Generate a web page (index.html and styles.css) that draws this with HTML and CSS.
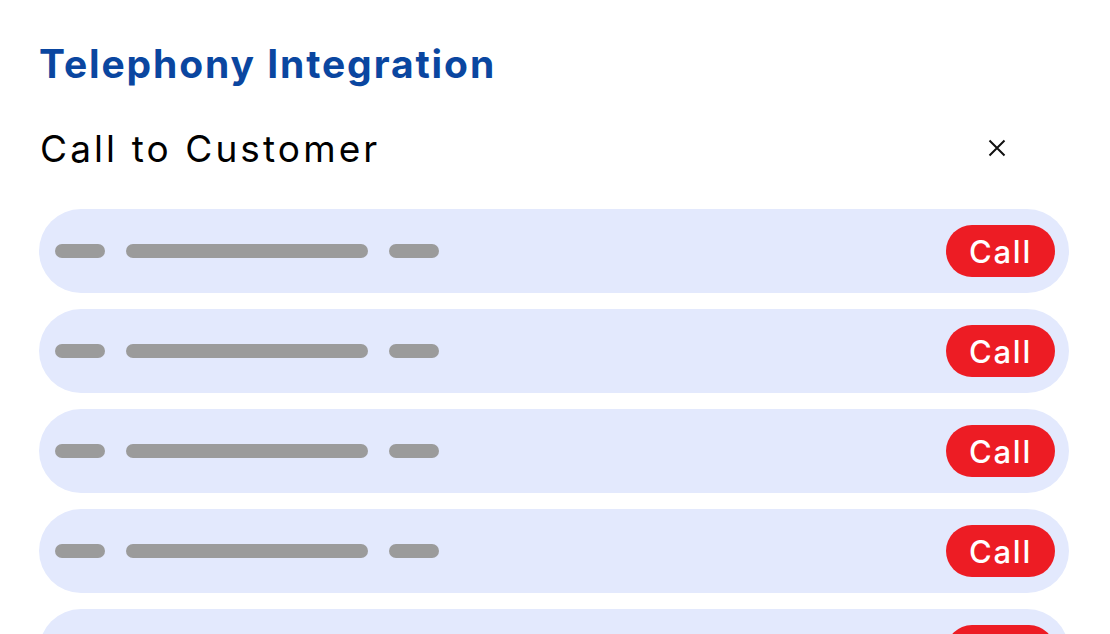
FILE: index.html
```html
<!DOCTYPE html>
<html>
<head>
<meta charset="utf-8">
<link rel="stylesheet" href="styles.css">
</head>
<body>
<main class="page">
  <h1 class="title">Telephony Integration</h1>
  <div class="header">
    <h2 class="subtitle">Call to Customer</h2>
    <button class="close" aria-label="Close">
      <svg width="18" height="18" viewBox="0 0 18 18"><path d="M1.5 1.5 L16.5 16.5 M16.5 1.5 L1.5 16.5" stroke="#111" stroke-width="2" fill="none"/></svg>
    </button>
  </div>
  <ul class="list">
    <li class="row"><span class="bar short"></span><span class="bar long"></span><span class="bar short"></span><button class="call">Call</button></li>
    <li class="row"><span class="bar short"></span><span class="bar long"></span><span class="bar short"></span><button class="call">Call</button></li>
    <li class="row"><span class="bar short"></span><span class="bar long"></span><span class="bar short"></span><button class="call">Call</button></li>
    <li class="row"><span class="bar short"></span><span class="bar long"></span><span class="bar short"></span><button class="call">Call</button></li>
    <li class="row"><span class="bar short"></span><span class="bar long"></span><span class="bar short"></span><button class="call">Call</button></li>
  </ul>
</main>
</body>
</html>
```
FILE: styles.css
```css
html, body {
  margin: 0;
  padding: 0;
  background: #fff;
  overflow: hidden;
  height: 634px;
}
body {
  font-family: Inter, "Noto Sans", sans-serif;
}
.page {
  padding: 36px 41px 0 39px;
}
.title {
  margin: 0;
  font-size: 39px;
  font-weight: 700;
  color: #0a46a0;
  line-height: 56px;
  letter-spacing: 1.9px;
}
.header {
  display: flex;
  align-items: center;
  justify-content: space-between;
  height: 72px;
  margin-top: 20px;
  margin-bottom: 25px;
}
.subtitle {
  margin: 0 0 0 1px;
  font-size: 37px;
  font-weight: 400;
  color: #000;
  letter-spacing: 3.1px;
}
.close {
  border: 0;
  background: none;
  padding: 0;
  width: 18px;
  height: 18px;
  margin-right: 63px;
  display: flex;
}
.list {
  list-style: none;
  margin: 0;
  padding: 0;
  display: flex;
  flex-direction: column;
  gap: 16px;
}
.row {
  display: flex;
  align-items: center;
  height: 84px;
  flex-shrink: 0;
  box-sizing: border-box;
  padding: 0 14px 0 16px;
  background: #e3e9fd;
  border-radius: 42px;
}
.bar {
  height: 14px;
  border-radius: 7px;
  background: #9b9b9b;
  margin-right: 21px;
}
.bar.short { width: 50px; }
.bar.long { width: 242px; }
.call {
  margin-left: auto;
  width: 109px;
  height: 52px;
  border: 0;
  border-radius: 26px;
  background: #ed1c24;
  color: #fff;
  font-family: inherit;
  font-size: 31px;
  font-weight: 500;
  letter-spacing: 1.8px;
  padding: 0;
}
```
